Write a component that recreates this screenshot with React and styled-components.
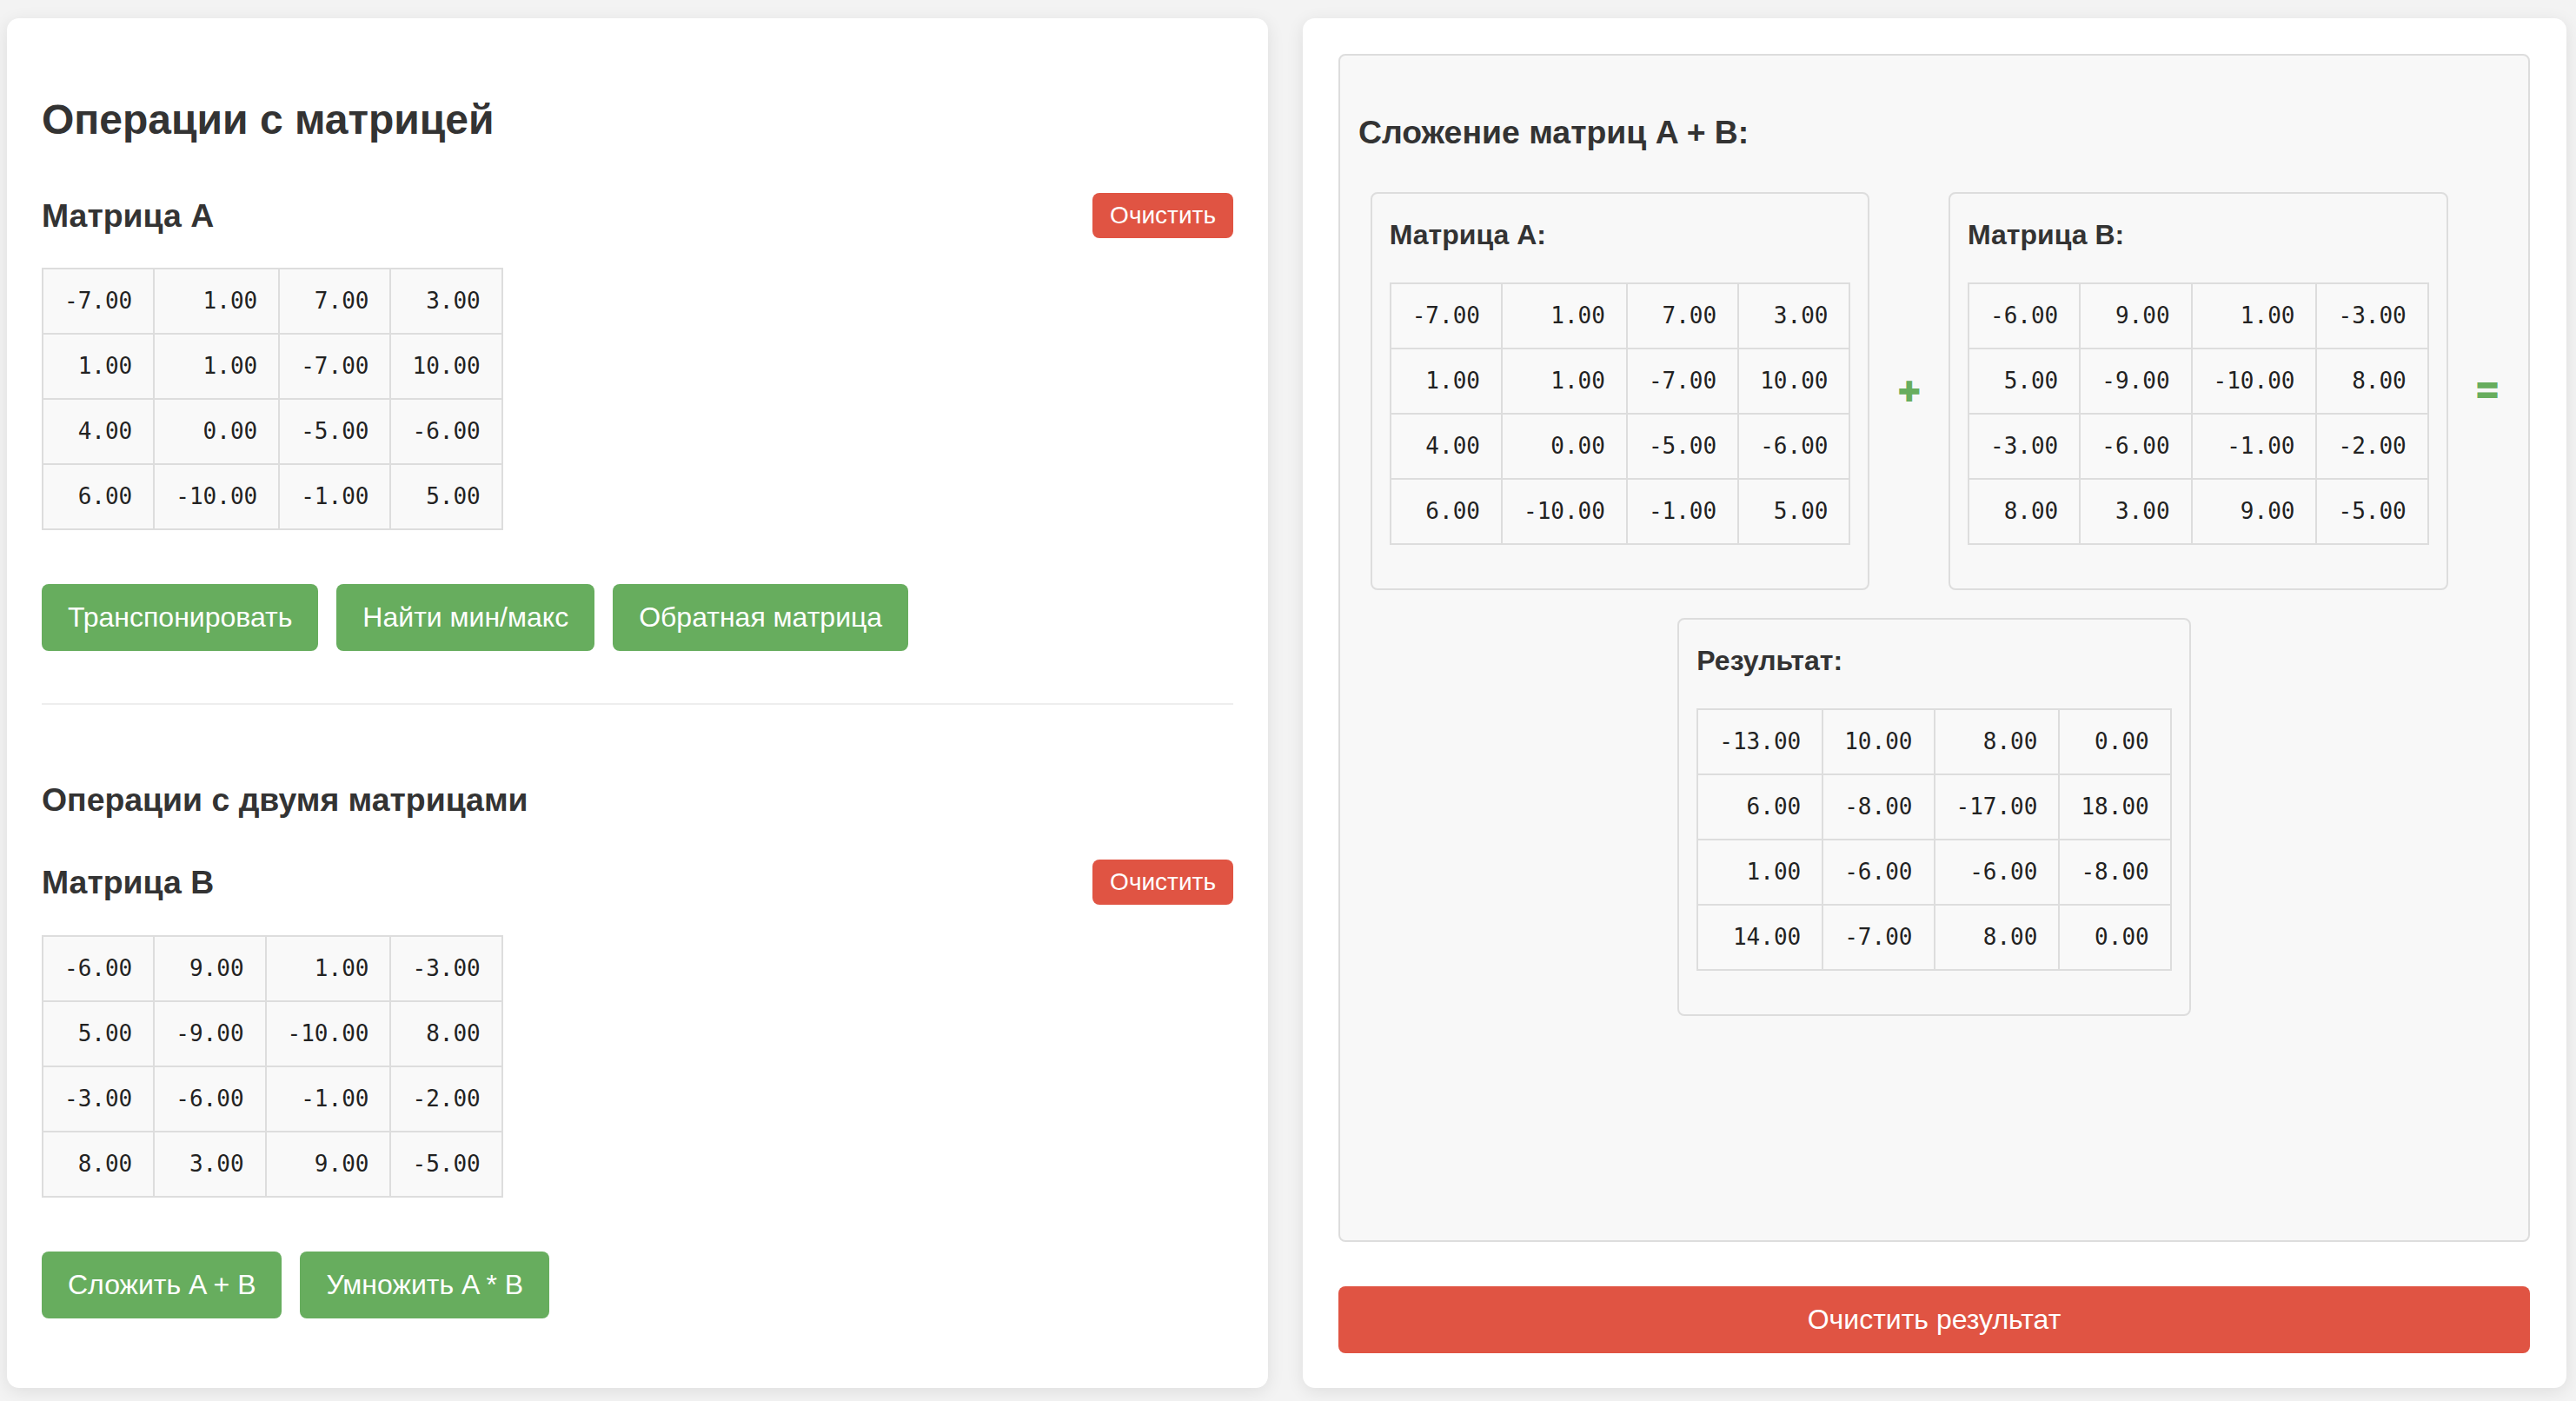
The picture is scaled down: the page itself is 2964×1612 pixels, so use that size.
import React from "react";
import styled, { createGlobalStyle } from "styled-components";

const GREEN = "#67ad5e";
const RED = "#e05443";

const GlobalStyle = createGlobalStyle`
  html, body {
    margin: 0;
    padding: 0;
    background: #f3f3f3;
    font-family: "Liberation Sans", Arial, sans-serif;
    color: #333;
  }
  * { box-sizing: border-box; }
`;

const Page = styled.div`
  min-height: 100vh;
  display: flex;
  gap: 40px;
  align-items: stretch;
  padding: 21px 11px 15px 8px;
`;

const Panel = styled.section`
  flex: 1 1 0;
  min-width: 0;
  background: #fff;
  border-radius: 14px;
  box-shadow: 0 4px 20px rgba(0, 0, 0, 0.09);
  padding: 40px 40px 40px 40px;
  display: flex;
  flex-direction: column;
`;

const ResultPanel = styled(Panel)`
  padding: 41px 42px 40px 41px;
`;

const MainTitle = styled.h2`
  margin: 49px 0 0;
  font-size: 48px;
  line-height: 56px;
  font-weight: 700;
  color: #333;
`;

const SectionTitle = styled.h3`
  margin: ${(p) => p.$top || 0}px 0 0;
  font-size: 37.4px;
  line-height: 44px;
  font-weight: 700;
  color: #333;
`;

const MatrixHeader = styled.div`
  display: flex;
  align-items: center;
  justify-content: space-between;
  margin-top: ${(p) => p.$top}px;
  height: 52px;
`;

const ClearButton = styled.button`
  font-family: "Liberation Sans", Arial, sans-serif;
  font-size: 28px;
  line-height: 32px;
  padding: 10px 20px;
  border: none;
  border-radius: 8px;
  background: ${RED};
  color: #fff;
  cursor: pointer;
`;

const Table = styled.table`
  border-collapse: collapse;
  margin-top: ${(p) => p.$top || 0}px;
  align-self: flex-start;
`;

const Cell = styled.td`
  border: 2px solid #ddd;
  background: #f9f9f9;
  padding: 21px 24px;
  font-family: "DejaVu Sans Mono", "Liberation Mono", monospace;
  font-size: 26px;
  line-height: 31px;
  text-align: right;
  color: #222;
  white-space: nowrap;
`;

const ButtonRow = styled.div`
  display: flex;
  gap: 21px;
  margin-top: 62px;
`;

const ActionButton = styled.button`
  font-family: "Liberation Sans", Arial, sans-serif;
  font-size: 32px;
  line-height: 37px;
  padding: 20px 30px;
  border: none;
  border-radius: 8px;
  background: ${GREEN};
  color: #fff;
  cursor: pointer;
`;

const Divider = styled.hr`
  margin: 60px 0 0;
  border: none;
  border-top: 2px solid #eee;
  height: 0;
`;

const ResultArea = styled.div`
  flex: 1;
  background: #f8f8f8;
  border: 2px solid #ddd;
  border-radius: 8px;
  padding: 66px 21px 30px;
`;

const OperationRow = styled.div`
  display: flex;
  flex-wrap: wrap;
  justify-content: center;
  align-items: center;
  column-gap: 33px;
  row-gap: 32px;
  margin-top: 47px;
`;

const MatrixBox = styled.div`
  background: #f8f8f8;
  border: 2px solid #ddd;
  border-radius: 8px;
  padding: 28px 20px 50px;
  display: flex;
  flex-direction: column;
`;

const BoxTitle = styled.h4`
  margin: 0 0 36px;
  font-size: 32px;
  line-height: 38px;
  font-weight: 700;
  color: #333;
`;

const Operator = styled.span`
  font-size: 42px;
  line-height: 46px;
  font-weight: 700;
  color: ${GREEN};
  -webkit-text-stroke: 2px ${GREEN};
`;

const WideRedButton = styled.button`
  margin-top: 51px;
  width: 100%;
  font-family: "Liberation Sans", Arial, sans-serif;
  font-size: 32px;
  line-height: 37px;
  padding: 20px 30px;
  border: none;
  border-radius: 8px;
  background: ${RED};
  color: #fff;
  cursor: pointer;
`;

const A = [
  [-7, 1, 7, 3],
  [1, 1, -7, 10],
  [4, 0, -5, -6],
  [6, -10, -1, 5],
];
const B = [
  [-6, 9, 1, -3],
  [5, -9, -10, 8],
  [-3, -6, -1, -2],
  [8, 3, 9, -5],
];
const SUM = A.map((row, i) => row.map((v, j) => v + B[i][j]));

function Matrix({ data, top }) {
  return (
    <Table $top={top}>
      <tbody>
        {data.map((row, i) => (
          <tr key={i}>
            {row.map((v, j) => (
              <Cell key={j}>{v.toFixed(2)}</Cell>
            ))}
          </tr>
        ))}
      </tbody>
    </Table>
  );
}

export default function App() {
  return (
    <>
      <GlobalStyle />
      <Page>
        <Panel>
          <MainTitle>Операции с матрицей</MainTitle>
          <MatrixHeader $top={56}>
            <SectionTitle>Матрица A</SectionTitle>
            <ClearButton>Очистить</ClearButton>
          </MatrixHeader>
          <Matrix data={A} top={34} />
          <ButtonRow>
            <ActionButton>Транспонировать</ActionButton>
            <ActionButton>Найти мин/макс</ActionButton>
            <ActionButton>Обратная матрица</ActionButton>
          </ButtonRow>
          <Divider />
          <SectionTitle $top={87}>Операции с двумя матрицами</SectionTitle>
          <MatrixHeader $top={47}>
            <SectionTitle>Матрица B</SectionTitle>
            <ClearButton>Очистить</ClearButton>
          </MatrixHeader>
          <Matrix data={B} top={35} />
          <ButtonRow>
            <ActionButton>Сложить A + B</ActionButton>
            <ActionButton>Умножить A * B</ActionButton>
          </ButtonRow>
        </Panel>
        <ResultPanel>
          <ResultArea>
            <SectionTitle>Сложение матриц A + B:</SectionTitle>
            <OperationRow>
              <MatrixBox>
                <BoxTitle>Матрица A:</BoxTitle>
                <Matrix data={A} />
              </MatrixBox>
              <Operator>+</Operator>
              <MatrixBox>
                <BoxTitle>Матрица B:</BoxTitle>
                <Matrix data={B} />
              </MatrixBox>
              <Operator>=</Operator>
              <MatrixBox>
                <BoxTitle>Результат:</BoxTitle>
                <Matrix data={SUM} />
              </MatrixBox>
            </OperationRow>
          </ResultArea>
          <WideRedButton>Очистить результат</WideRedButton>
        </ResultPanel>
      </Page>
    </>
  );
}
